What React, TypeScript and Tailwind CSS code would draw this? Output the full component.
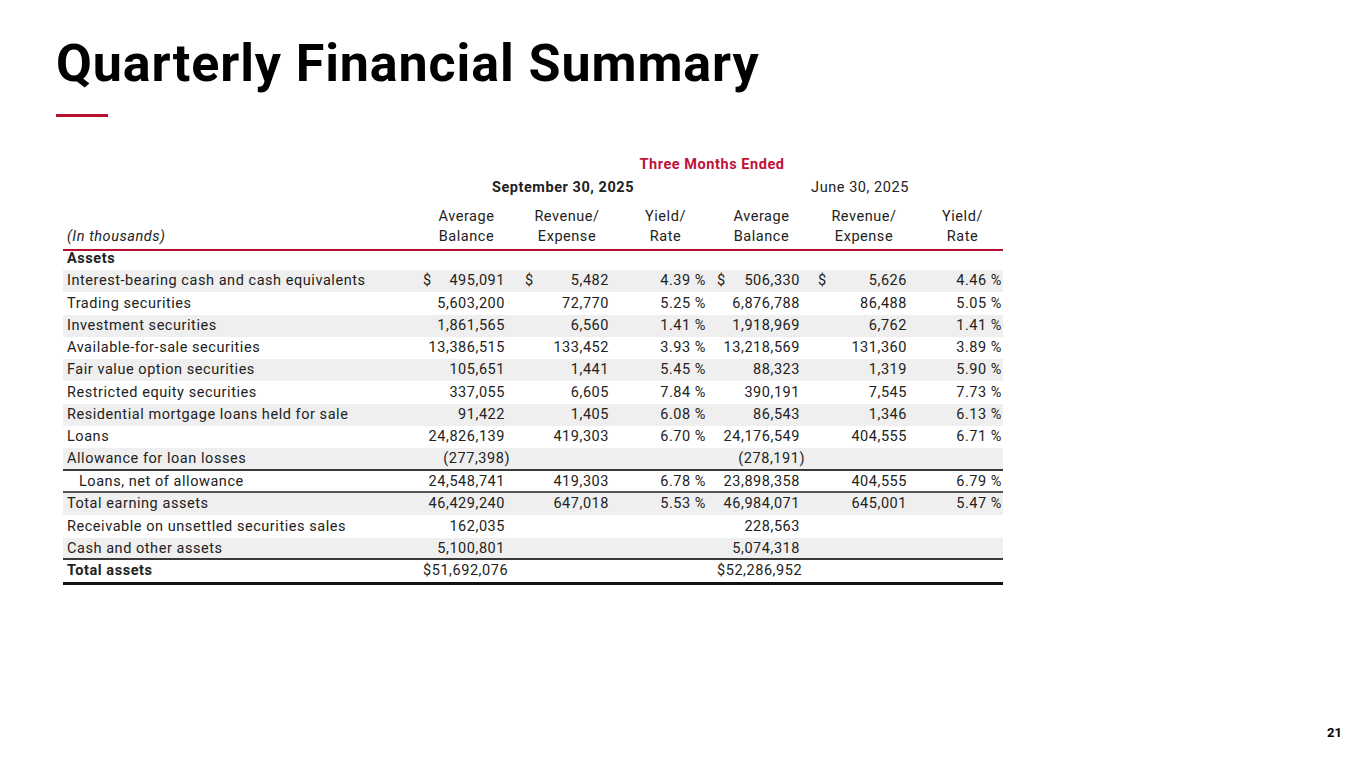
import React from "react";

type Row = {
  label: string;
  c: (string | null)[];
  dollar?: boolean;
  stripe?: boolean;
  bold?: boolean;
  indent?: boolean;
  border?: string;
  h?: string;
};

const rows: Row[] = [
  { label: "Interest-bearing cash and cash equivalents", c: ["495,091", "5,482", "4.39 %", "506,330", "5,626", "4.46 %"], dollar: true, stripe: true },
  { label: "Trading securities", c: ["5,603,200", "72,770", "5.25 %", "6,876,788", "86,488", "5.05 %"] },
  { label: "Investment securities", c: ["1,861,565", "6,560", "1.41 %", "1,918,969", "6,762", "1.41 %"], stripe: true },
  { label: "Available-for-sale securities", c: ["13,386,515", "133,452", "3.93 %", "13,218,569", "131,360", "3.89 %"] },
  { label: "Fair value option securities", c: ["105,651", "1,441", "5.45 %", "88,323", "1,319", "5.90 %"], stripe: true },
  { label: "Restricted equity securities", c: ["337,055", "6,605", "7.84 %", "390,191", "7,545", "7.73 %"] },
  { label: "Residential mortgage loans held for sale", c: ["91,422", "1,405", "6.08 %", "86,543", "1,346", "6.13 %"], stripe: true },
  { label: "Loans", c: ["24,826,139", "419,303", "6.70 %", "24,176,549", "404,555", "6.71 %"] },
  { label: "Allowance for loan losses", c: ["(277,398)", null, null, "(278,191)", null, null], stripe: true, border: "border-b-2 border-[#3a3a3a]" },
  { label: "Loans, net of allowance", c: ["24,548,741", "419,303", "6.78 %", "23,898,358", "404,555", "6.79 %"], indent: true, border: "border-b-2 border-[#555555]" },
  { label: "Total earning assets", c: ["46,429,240", "647,018", "5.53 %", "46,984,071", "645,001", "5.47 %"], stripe: true },
  { label: "Receivable on unsettled securities sales", c: ["162,035", null, null, "228,563", null, null] },
  { label: "Cash and other assets", c: ["5,100,801", null, null, "5,074,318", null, null], stripe: true, border: "border-b-2 border-[#3a3a3a]" },
  { label: "Total assets", c: ["$51,692,076", null, null, "$52,286,952", null, null], bold: true, border: "border-b-[3px] border-[#111111]", h: "h-[25px]" },
];

const grid = "grid grid-cols-[352px_95px_104px_97px_95px_106px_91px]";

function Num({ v }: { v: string | null }) {
  if (!v) return null;
  if (v.startsWith("(")) {
    return <span className="-mr-[5px]">{v}</span>;
  }
  return <span>{v}</span>;
}

export default function App() {
  return (
    <div
      className="w-[1365px] h-[769px] bg-white relative overflow-hidden text-[#222222]"
      style={{ fontFamily: "Roboto, 'Liberation Sans', sans-serif" }}
    >
      <div className="pl-[56px] pt-[32px]">
        <h1 className="text-[52px] leading-[64px] font-bold text-black tracking-[0.9px]">Quarterly Financial Summary</h1>
        <div className="mt-[18px] w-[52px] h-[3px] bg-[#b5112f]" />
      </div>

      <div className="ml-[63px] mt-[37px] w-[940px] text-[14.5px] tracking-[0.55px]">
        <div className={`${grid} h-[22px] items-center`}>
          <div />
          <div className="col-span-6 text-center font-bold text-[#c0123a] pl-[6px]">Three Months Ended</div>
        </div>
        <div className={`${grid} h-[24px] items-center`}>
          <div />
          <div className="col-span-3 text-center font-bold">September 30, 2025</div>
          <div className="col-span-3 text-center pl-[6px]">June 30, 2025</div>
        </div>
        <div className={`${grid} pt-[7px] pb-[2px] border-b-2 border-[#b5112f] leading-[20px]`}>
          <div className="self-end pl-[4px] italic">(In thousands)</div>
          <div className="text-center pl-[8px]">Average<br />Balance</div>
          <div className="text-center pl-[10px]">Revenue/<br />Expense</div>
          <div className="text-center pl-[6px]">Yield/<br />Rate</div>
          <div className="text-center pl-[6px]">Average<br />Balance</div>
          <div className="text-center pl-[10px]">Revenue/<br />Expense</div>
          <div className="text-center pl-[10px]">Yield/<br />Rate</div>
        </div>
        <div className="h-[19px] flex items-center pb-[3px] pl-[4px] font-bold">Assets</div>
        {rows.map((r, i) => (
          <div
            key={i}
            className={`${grid} ${r.h ?? "h-[22.3px]"} items-center ${r.stripe ? "bg-[#efefef]" : ""} ${r.border ?? ""} ${r.bold ? "font-bold" : ""}`}
          >
            <div className={r.indent ? "pl-[16px]" : "pl-[4px]"}>{r.label}</div>
            <div className={`flex justify-between pl-[8px] pr-[5px] ${r.bold ? "font-normal" : ""}`}>
              <span>{r.dollar ? "$" : ""}</span>
              <Num v={r.c[0]} />
            </div>
            <div className="flex justify-between pl-[15px] pr-[5px]">
              <span>{r.dollar ? "$" : ""}</span>
              <Num v={r.c[1]} />
            </div>
            <div className="flex justify-end pr-[5px]">
              <Num v={r.c[2]} />
            </div>
            <div className={`flex justify-between pl-[6px] pr-[6px] ${r.bold ? "font-normal" : ""}`}>
              <span>{r.dollar ? "$" : ""}</span>
              <Num v={r.c[3]} />
            </div>
            <div className="flex justify-between pl-[12px] pr-[5px]">
              <span>{r.dollar ? "$" : ""}</span>
              <Num v={r.c[4]} />
            </div>
            <div className="flex justify-end pr-[1px]">
              <Num v={r.c[5]} />
            </div>
          </div>
        ))}
      </div>

      <div className="absolute right-[23px] bottom-[27px] text-[13px] font-bold text-black">21</div>
    </div>
  );
}
